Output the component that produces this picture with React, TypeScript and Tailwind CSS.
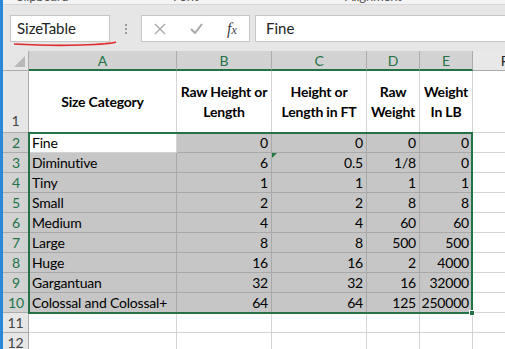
import React from 'react';

const rows: [string, string, string, string, string][] = [
  ['Fine', '0', '0', '0', '0'],
  ['Diminutive', '6', '0.5', '1/8', '0'],
  ['Tiny', '1', '1', '1', '1'],
  ['Small', '2', '2', '8', '8'],
  ['Medium', '4', '4', '60', '60'],
  ['Large', '8', '8', '500', '500'],
  ['Huge', '16', '16', '2', '4000'],
  ['Gargantuan', '32', '32', '16', '32000'],
  ['Colossal and Colossal+', '64', '64', '125', '250000'],
];

const cols = 'grid grid-cols-[26px_148px_95px_95px_53px_53px_64px]';

function ColHead({ label, sel }: { label: string; sel?: boolean }) {
  return (
    <div
      className={
        sel
          ? 'h-[20px] flex items-center justify-center bg-[#d2d2d2] text-[#217346] border-r border-[#ababab] border-b-2 border-b-[#217346]'
          : 'h-[20px] flex items-center justify-center bg-[#e8e8e8] text-[#262626] border-r border-[#ababab] border-b border-b-[#ababab]'
      }
    >
      {label}
    </div>
  );
}

function RowHead({ n, sel, tall }: { n: number; sel?: boolean; tall?: boolean }) {
  return (
    <div
      className={
        (tall ? 'h-[62px] items-end pb-[1px] ' : 'h-[20px] items-center ') +
        (sel
          ? 'flex justify-center bg-[#d2d2d2] text-[#217346] border-b border-[#ababab]'
          : 'flex justify-center bg-[#e6e6e6] text-[#444] border-b border-[#ababab] border-r border-r-[#ababab]')
      }
    >
      {n}
    </div>
  );
}

export default function App() {
  return (
    <div
      className="w-[505px] h-[349px] overflow-hidden flex bg-white text-[14px] tracking-[-0.2px] text-black"
      style={{ fontFamily: 'Lato, "Open Sans", sans-serif' }}
    >
      <div className="w-[3px] h-full shrink-0 bg-[#2b88d8]" />
      <div className="flex-1 min-w-0 flex flex-col relative overflow-hidden">
        {/* ribbon group labels, cut off */}
        <div className="h-[5px] shrink-0 bg-[#f3f3f3] border-b border-[#d6d6d6] relative overflow-hidden text-[13px] text-[#555]">
          <span className="absolute left-[12px] top-[-13px]">Clipboard</span>
          <span className="absolute left-[170px] top-[-13px]">Font</span>
          <span className="absolute left-[342px] top-[-13px]">Alignment</span>
        </div>

        {/* formula bar */}
        <div className="h-[46px] shrink-0 bg-[#e6e6e6] flex items-start pt-[10px] pl-[7px] text-[15px] tracking-normal">
          <div className="w-[100px] h-[27px] bg-white border border-[#c6c6c6] flex items-center pl-[6px] text-[#222]">
            SizeTable
          </div>
          <div className="w-[31px] h-[27px] flex flex-col items-center justify-center gap-[2px]">
            <div className="w-[2px] h-[2px] bg-[#9a9a9a]" />
            <div className="w-[2px] h-[2px] bg-[#9a9a9a]" />
            <div className="w-[2px] h-[2px] bg-[#9a9a9a]" />
          </div>
          <div className="w-[109px] h-[27px] bg-white border border-[#c6c6c6] flex items-center">
            <div className="w-[37px] flex justify-center">
              <svg width="12" height="12" viewBox="0 0 12 12">
                <path d="M1 1 L11 11 M11 1 L1 11" stroke="#a8a8a8" strokeWidth="1.3" />
              </svg>
            </div>
            <div className="w-[37px] flex justify-center">
              <svg width="13" height="11" viewBox="0 0 13 11">
                <path d="M1 6 L5 10 L12 1" stroke="#a8a8a8" strokeWidth="2" fill="none" />
              </svg>
            </div>
            <div
              className="w-[35px] flex justify-center items-baseline italic text-[16px] text-[#444]"
              style={{ fontFamily: '"Liberation Serif", serif' }}
            >
              <span>f</span>
              <span className="text-[12px]">x</span>
            </div>
          </div>
          <div className="ml-[5px] flex-1 h-[27px] bg-white border border-[#c6c6c6] border-r-0 flex items-center pl-[10px] text-[#222]">
            Fine
          </div>
        </div>

        {/* red pen underline annotation */}
        <svg className="absolute left-[8px] top-[40px]" width="110" height="8" viewBox="0 0 110 8">
          <path d="M3 4 Q 40 6 70 5 T 105 2" stroke="#e02b2b" strokeWidth="1.6" fill="none" />
        </svg>

        {/* sheet */}
        <div className="relative shrink-0">
          <div className={cols}>
            <div className="h-[20px] bg-[#e6e6e6] border-r border-b border-[#ababab] relative">
              <svg className="absolute right-[3px] bottom-[3px]" width="11" height="11" viewBox="0 0 11 11">
                <polygon points="11,0 11,11 0,11" fill="#b9b9b9" />
              </svg>
            </div>
            <ColHead label="A" sel />
            <ColHead label="B" sel />
            <ColHead label="C" sel />
            <ColHead label="D" sel />
            <ColHead label="E" sel />
            <ColHead label="F" />
          </div>

          {/* header row */}
          <div className={cols}>
            <RowHead n={1} tall />
            {['Size Category', 'Raw Height or Length', 'Height or Length in FT', 'Raw Weight', 'Weight In LB'].map((t, i) => (
              <div
                key={i}
                className="h-[62px] flex items-center justify-center text-center font-bold leading-[20px] border-r border-b border-[#d4d4d4] px-[1px]"
              >
                {t}
              </div>
            ))}
            <div className="h-[62px] border-b border-[#d4d4d4]" />
          </div>

          {rows.map((r, ri) => (
            <div key={ri} className={cols}>
              <RowHead n={ri + 2} sel />
              <div
                className={
                  'h-[20px] flex items-center pl-[3px] border-r border-b whitespace-nowrap ' +
                  (ri === 0 ? 'bg-white border-[#d4d4d4]' : 'bg-[#c6c6c6] border-[#a9a9a9]')
                }
              >
                {r[0]}
              </div>
              {r.slice(1).map((v, ci) => (
                <div
                  key={ci}
                  className="h-[20px] flex items-center justify-end pr-[3px] bg-[#c6c6c6] border-r border-b border-[#a9a9a9] relative"
                >
                  {ri === 1 && ci === 1 && (
                    <svg className="absolute left-0 top-0" width="5" height="5" viewBox="0 0 5 5">
                      <polygon points="0,0 5,0 0,5" fill="#1e7a3c" />
                    </svg>
                  )}
                  {v}
                </div>
              ))}
              <div className="h-[20px] border-b border-[#d4d4d4]" />
            </div>
          ))}

          {[11, 12].map((n) => (
            <div key={n} className={cols}>
              <RowHead n={n} />
              {[0, 1, 2, 3, 4].map((c) => (
                <div key={c} className="h-[20px] border-r border-b border-[#d4d4d4]" />
              ))}
              <div className="h-[20px] border-b border-[#d4d4d4]" />
            </div>
          ))}

          {/* selection border A2:E10 */}
          <div className="absolute left-[25px] top-[81px] w-[445px] h-[182px] border-2 border-[#217346] pointer-events-none">
            <div className="absolute right-[-4px] bottom-[-4px] w-[6px] h-[6px] bg-[#217346] border border-white" />
          </div>
        </div>
      </div>
    </div>
  );
}
